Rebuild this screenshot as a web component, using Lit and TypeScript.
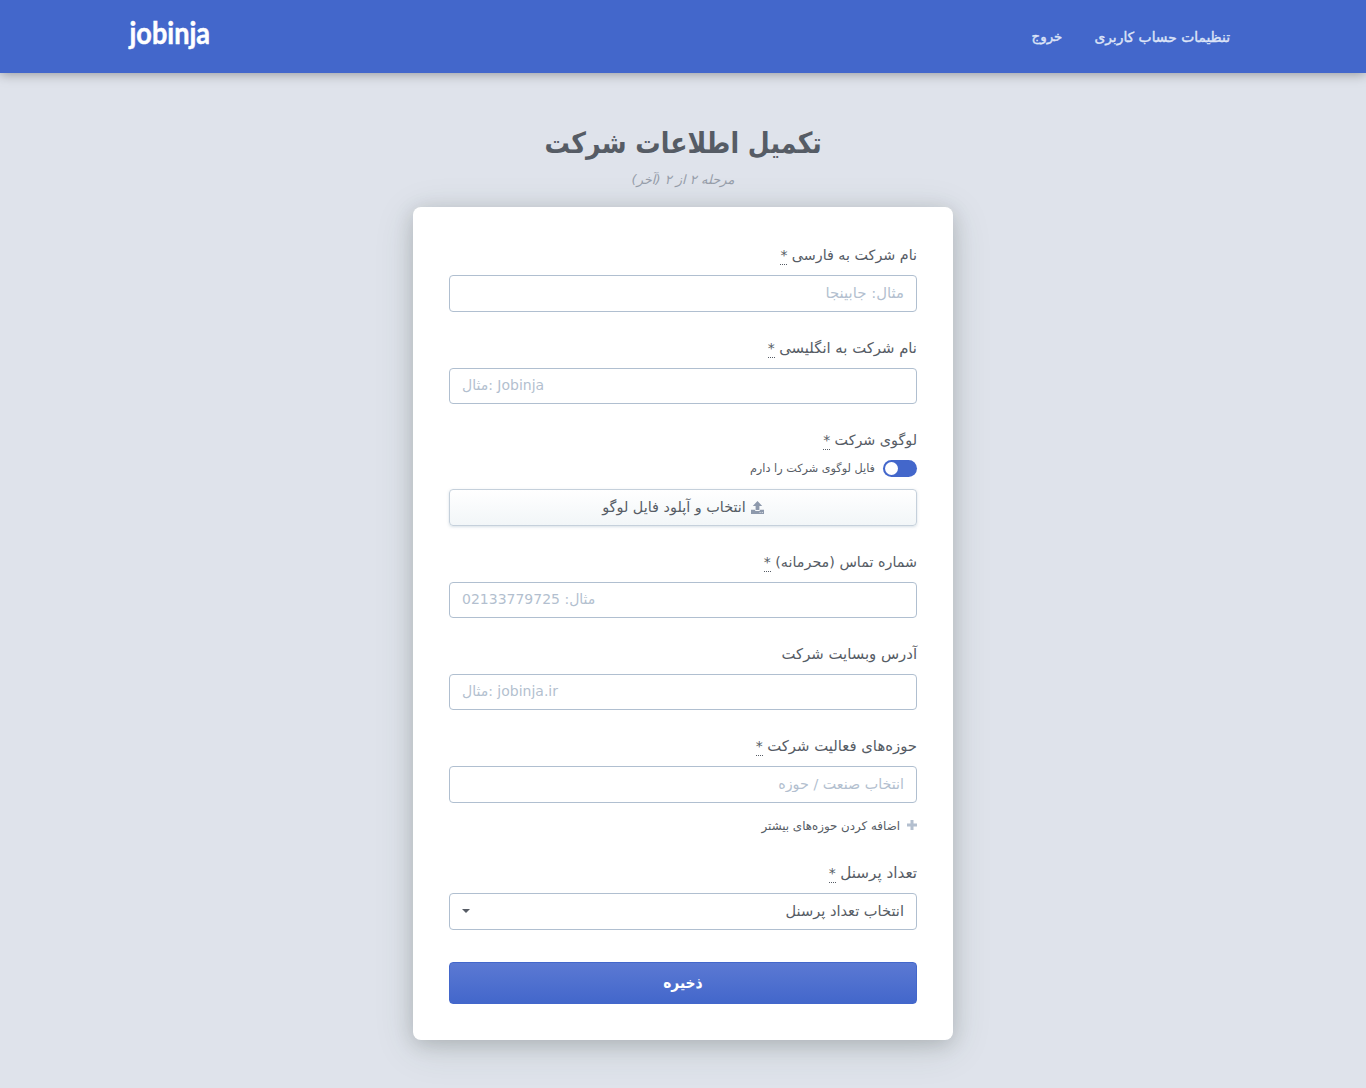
import { LitElement, html, css, nothing } from "lit";
import { customElement } from "lit/decorators.js";

@customElement("app-root")
export class AppRoot extends LitElement {
  static styles = css`
    :host {
      display: block;
      min-height: 1088px;
      box-sizing: border-box;
      background: #dfe3eb;
      color: #565c65;
      font-family: "DejaVu Sans", sans-serif;
      font-size: 14px;
      overflow: hidden;
    }
    * { box-sizing: border-box; }
    .header {
      height: 73px;
      padding: 0 136px 0 120px;
      display: flex;
      align-items: center;
      justify-content: space-between;
      background: #4367cb;
      box-shadow: 0 0 12px rgba(0, 0, 0, 0.4);
    }
    .nav { display: flex; gap: 32px; }
    .nav a { color: #dde4f7; font-size: 13.85px; line-height: 24px; white-space: nowrap; -webkit-text-stroke: 0.4px #dde4f7; }
    .nav a + a { font-size: 13.4px; }
    .logo { display: block; width: 100px; height: 56px; fill: #fff; overflow: visible; }
    .logo text { font-family: Lato, sans-serif; font-weight: 700; font-size: 29.5px; stroke: #fff; stroke-width: 0.5px; }
    .main { display: flex; flex-direction: column; align-items: center; padding-top: 46px; }
    .title { margin: 0; font-size: 29px; font-weight: 700; line-height: 48px; height: 48px; white-space: nowrap; transform: scaleX(0.871); }
    .step { height: 40px; line-height: 26px; font-style: italic; font-size: 13px; color: #979eaa; }
    .card {
      width: 540px;
      height: 833px;
      padding: 36px;
      border-radius: 8px;
      background: #fff;
      box-shadow: 0 8px 40px rgba(50, 75, 60, 0.14), 0 4px 20px rgba(0, 0, 0, 0.16);
      display: flex;
      flex-direction: column;
    }
    .label { height: 32px; line-height: 24px; font-size: 14px; margin-top: 24px; white-space: nowrap; }
    .label.first { margin-top: 0; }
    .sm { font-size: 14.3px; }
    .md { font-size: 14.85px; }
    .lg { font-size: 15.2px; }
    .label abbr { text-decoration: none; border-bottom: 1px dotted #565c65; display: inline-block; line-height: 18px; height: 19px; }
    .input {
      width: 100%;
      height: 36px;
      flex: none;
      padding: 0 12px 2px;
      border: 1px solid #b0bfd0;
      border-radius: 4px;
      background: #fff;
      color: #565c65;
      font: 14px "DejaVu Sans", sans-serif;
    }
    .input.tall { height: 37px; font-size: 14.3px; }
    .input.name { font-size: 14.9px; }
    .input::placeholder { color: #b3bfcf; opacity: 1; }
    .select { display: flex; align-items: center; justify-content: space-between; }
    .input.select { font-size: 14.6px; }
    .caret { border: 4px solid transparent; border-top-color: #565c65; border-bottom: 0; }
    .toggle-row { display: flex; align-items: center; gap: 8px; height: 17px; font-size: 11.25px; }
    .toggle { width: 34px; height: 17px; border-radius: 9px; background: #4367cb; padding: 2px; display: flex; justify-content: flex-end; }
    .knob { width: 13px; height: 13px; border-radius: 50%; background: #fff; }
    .upload {
      margin-top: 12px;
      height: 37px;
      flex: none;
      display: flex;
      align-items: center;
      justify-content: center;
      gap: 5px;
      border: 1px solid #c5d0db;
      border-radius: 4px;
      background: linear-gradient(#fff, #f2f6f8);
      box-shadow: 0 1px 3px rgba(120, 150, 170, 0.3);
      font: 14.4px "DejaVu Sans", sans-serif;
      color: #565c65;
      padding-bottom: 2px;
    }
    .more { display: flex; align-items: center; gap: 7px; height: 34px; padding-top: 10px; font-size: 11.85px; }
    .more span { padding-top: 2px; }
    .save {
      margin-top: 32px;
      height: 42px;
      flex: none;
      border: 1px solid #4367cb;
      border-radius: 4px;
      background: linear-gradient(#5b79d3, #4367cb);
      color: #fff;
      font: 700 16px "DejaVu Sans", sans-serif;
      padding-bottom: 3px;
    }
    .save span { display: inline-block; transform: scaleX(0.86); }
  `;

  private label(text: string, size: string, required = true, first = false) {
    return html`<div class="label ${first ? "first" : ""}"><span class=${size}>${text}</span>${required ? html` <abbr>*</abbr>` : nothing}</div>`;
  }

  render() {
    return html`
      <header class="header" dir="ltr">
        <svg class="logo" viewBox="0 0 100 56">
          <text x="9.5" y="35" textLength="80.5" lengthAdjust="spacingAndGlyphs">jobinja</text>
        </svg>
        <nav class="nav" dir="rtl"><a>تنظیمات حساب کاربری</a><a>خروج</a></nav>
      </header>
      <main class="main" dir="rtl">
        <h1 class="title">تکمیل اطلاعات شرکت</h1>
        <div class="step"><span>مرحله ۲ از ۲ (آخر)</span></div>
        <form class="card">
          ${this.label("نام شرکت به فارسی", "sm", true, true)}
          <input class="input tall name" placeholder="مثال: جابینجا" />
          ${this.label("نام شرکت به انگلیسی", "md")}
          <input class="input" dir="ltr" placeholder="مثال: Jobinja" />
          ${this.label("لوگوی شرکت", "sm")}
          <div class="toggle-row"><span class="toggle"><span class="knob"></span></span><span>فایل لوگوی شرکت را دارم</span></div>
          <button class="upload" type="button">
            <svg width="13" height="13" viewBox="0 0 13 13" fill="#8d99ac"><path d="M6.5 0 11.2 4.9H8.4V9H4.6V4.9H1.8ZM0 8.7H3.8Q4.1 9.9 5 9.9H8Q8.9 9.9 9.2 8.7H13V13H0Z" /><path d="M8.6 11.2h1v.8h-1zM10.8 11.2h1v.8h-1z" fill="#fff" /></svg>
            <span>انتخاب و آپلود فایل لوگو</span>
          </button>
          ${this.label("شماره تماس (محرمانه)", "sm")}
          <input class="input" dir="ltr" placeholder="مثال: 02133779725" />
          ${this.label("آدرس وبسایت شرکت", "md", false)}
          <input class="input" dir="ltr" placeholder="مثال: jobinja.ir" />
          ${this.label("حوزه‌های فعالیت شرکت", "md")}
          <input class="input tall" placeholder="انتخاب صنعت / حوزه" />
          <div class="more">
            <svg width="10" height="10" viewBox="0 0 10 10" fill="#b3bfcf"><path d="M3.5 0h3v3.5H10v3H6.5V10h-3V6.5H0v-3h3.5z" /></svg>
            <span>اضافه کردن حوزه‌های بیشتر</span>
          </div>
          ${this.label("تعداد پرسنل", "lg")}
          <div class="input tall select"><span>انتخاب تعداد پرسنل</span><i class="caret"></i></div>
          <button class="save" type="button"><span>ذخیره</span></button>
        </form>
      </main>
    `;
  }
}
